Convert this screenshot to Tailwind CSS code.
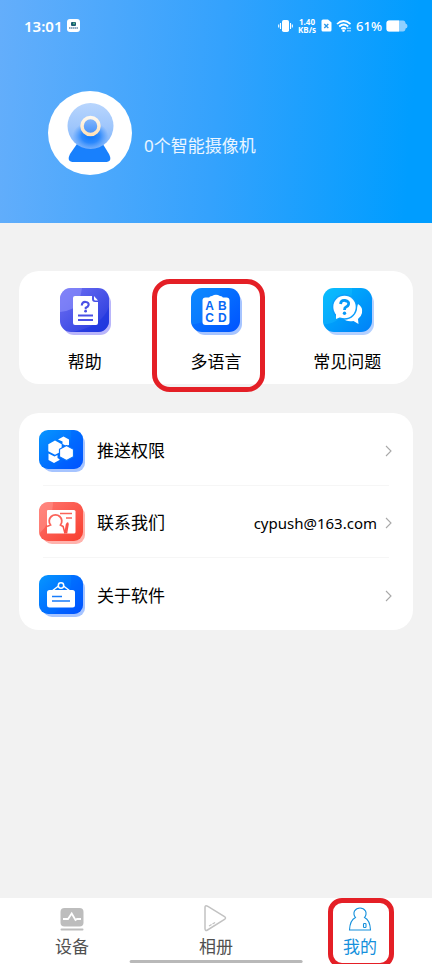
<!DOCTYPE html>
<html lang="zh-CN">
<head>
<meta charset="utf-8">
<meta name="viewport" content="width=device-width, initial-scale=1">
<title>我的</title>
<script src="https://cdn.jsdelivr.net/npm/@tailwindcss/browser@4"></script>
</head>
<body class="min-h-screen flex flex-col bg-[#f2f2f2] text-black text-[17px] leading-6 font-['Noto_Sans','Noto_Sans_CJK_SC',sans-serif]">

<header class="bg-[linear-gradient(94deg,#64aefb_0%,#34a2fd_50%,#009dff_94%)] text-white pb-12">
  <div class="flex items-center justify-between h-[51px] px-6">
    <div class="flex items-center gap-[5px]">
      <span class="text-[15px] font-semibold">13:01</span>
      <svg width="13" height="13" viewBox="0 0 13 13" aria-hidden="true"><rect width="13" height="13" rx="3" fill="#fff"/><rect x="4" y="3" width="5" height="4" rx="1" fill="#1d5c74"/><circle cx="7" cy="4.500" r="1" fill="#5fc08a"/><path d="M2 9h9" stroke="#6d8fae" stroke-width="1.500" stroke-dasharray="1.500 .4"/></svg>
    </div>
    <div class="flex items-center gap-1">
      <svg width="15" height="14" viewBox="0 0 15 14" aria-hidden="true" fill="none" stroke="#fff"><rect x="4" y="1" width="7" height="12" rx="1.800" fill="#fff" stroke="none"/><path d="M2.500 4v6M.7 5.500v3M12.500 4v6M14.300 5.500v3" stroke-width="1.100"/></svg>
      <span class="flex flex-col items-center w-5 text-[8px] leading-[8px] font-bold"><span>1.40</span><span>KB/s</span></span>
      <svg width="11" height="13" viewBox="0 0 11 13" aria-hidden="true"><path d="M2 .5h5l3.500 3V11q0 1.500-1.500 1.500H2Q.5 12.500.5 11V2Q.5.500 2 .5z" fill="#fff"/><path d="M3.300 5l4 4m0-4l-4 4" stroke="#2a96e8" stroke-width="1.400"/></svg>
      <svg width="16" height="14" viewBox="0 0 16 14" aria-hidden="true" fill="none" stroke="#fff" stroke-width="1.700"><path d="M1 5Q7.500-1 14.500 5M3.200 7.500q4.400-4 9 0M5.400 10q2.200-2 4.600 0"/><circle cx="7.600" cy="11.700" r="1.300" fill="#fff" stroke="none"/><path d="M12 8.500v4M14 8.500v4" stroke-width="1.100" stroke-dasharray="1.600 .8"/></svg>
      <span class="text-[13px] font-medium">61%</span>
      <svg width="22" height="12" viewBox="0 0 22 12" aria-hidden="true"><path d="M3 .5h14q2.300 0 2.600 3Q21.500 4 21.500 6t-1.900 2.500q-.3 3-2.600 3H3Q.5 11.500.5 9V3Q.5.500 3 .5z" fill="#8fd0ff"/><path d="M13 .5H3Q.5.500.5 3v6q0 2.500 2.500 2.500h10z" fill="#fff"/></svg>
    </div>
  </div>
  <div class="flex items-center gap-3 pl-12 pt-10">
    <svg width="84" height="84" viewBox="0 0 84 84" role="img" aria-label="头像">
      <defs>
        <linearGradient id="lens" x1="0" y1="0" x2="0" y2="1"><stop offset="0" stop-color="#b8d5fd"/><stop offset=".5" stop-color="#a0c7fc"/><stop offset="1" stop-color="#7ab2fc"/></linearGradient>
        <radialGradient id="glow" cx=".5" cy=".5" r=".5"><stop offset="0" stop-color="#0876fc"/><stop offset=".5" stop-color="#1c80fc" stop-opacity=".85"/><stop offset="1" stop-color="#388ffc" stop-opacity="0"/></radialGradient>
        <linearGradient id="ring" x1="0" y1="0" x2="0" y2="1"><stop offset="0" stop-color="#fff8ed"/><stop offset="1" stop-color="#ffe2b8"/></linearGradient>
        <linearGradient id="pupil" x1="0" y1="0" x2="0" y2="1"><stop offset="0" stop-color="#8abafb"/><stop offset="1" stop-color="#4390fa"/></linearGradient>
      </defs>
      <circle cx="42" cy="42" r="42" fill="#fff"/>
      <path d="M31 50h22l8 13q4 8-4 8H26q-8 0-4-8z" fill="#1880fd"/>
      <circle cx="42.500" cy="35" r="23" fill="url(#lens)"/>
      <ellipse cx="42.500" cy="45" rx="18" ry="14" fill="url(#glow)"/>
      <circle cx="42.500" cy="35" r="8.500" fill="url(#pupil)" stroke="url(#ring)" stroke-width="3.500"/>
    </svg>
    <p class="pt-[26px] text-white/90">0个智能摄像机</p>
  </div>
</header>

<main class="grow px-[19px] pt-12">
  <nav aria-label="快捷入口" class="grid grid-cols-3 rounded-[20px] bg-white">
    <a href="#help" class="flex flex-col items-center gap-[14px] pt-[17px] pb-[10px]">
      <svg class="overflow-visible" width="49" height="48" viewBox="0 0 49 48" aria-hidden="true">
        <defs><linearGradient id="a1" x1="0" y1="0" x2="1" y2="1"><stop offset="0" stop-color="#7272f4"/><stop offset="1" stop-color="#2237dc"/></linearGradient><clipPath id="tile"><rect width="49" height="44" rx="11"/></clipPath></defs>
        <rect x="3" y="4" width="48" height="43" rx="11" fill="#b9b5fa"/><g clip-path="url(#tile)"><rect width="49" height="44" fill="url(#a1)"/><path d="M0 0h22Q20 14 14 20 8 23 0 24z" fill="#8b8dfa" opacity=".65"/><path d="M49 19Q42 38 13 44h36z" fill="#1c36df" opacity=".6"/></g>
        <path d="M15 8h17v3q0 3 3 3h3v21q0 2-2 2H15q-2 0-2-2V10q0-2 2-2z" fill="#fff"/><path d="M34 8v3q0 1.500 1.500 1.500H38z" fill="#fff"/>
        <path d="M21.800 17.500q.3-4 4-3.500 3.500.5 2.700 3.300-.5 1.700-2.700 2.500v1.400" fill="none" stroke="#4a50e5" stroke-width="2.200"/><circle cx="25.600" cy="23.200" r="1.400" fill="#4a50e5"/><path d="M18 27.500h15M18 32h15" stroke="#4a50e5" stroke-width="2"/>
      </svg>
      <span>帮助</span>
    </a>
    <a href="#language" class="relative flex flex-col items-center gap-[14px] pt-[17px] pb-[10px]">
      <svg class="overflow-visible" width="49" height="48" viewBox="0 0 49 48" role="img" aria-label="ABCD">
        <defs><linearGradient id="a2" x1="0" y1="0" x2="1" y2="1"><stop offset="0" stop-color="#0a83ff"/><stop offset="1" stop-color="#0053ff"/></linearGradient></defs>
        <rect x="3" y="4" width="48" height="43" rx="11" fill="#a6c4ff"/><g clip-path="url(#tile)"><rect width="49" height="44" fill="url(#a2)"/><path d="M29 0q1 19-16 33Q7 37 0 36V0z" fill="#1595ff" opacity=".35"/></g>
        <rect x="11.500" y="9.500" width="27" height="27.500" rx="3" fill="#fff"/><path d="M18 11q0-3 3-3 4-2.500 8 0 3 0 3 3z" fill="#fff"/>
        <g fill="#0868f5" font-family="Liberation Sans, sans-serif" font-size="12" font-weight="bold" text-anchor="middle"><text x="18.700" y="22">A</text><text x="31.300" y="22">B</text><text x="18.700" y="34">C</text><text x="31.300" y="34">D</text></g>
      </svg>
      <span>多语言</span>
      <span class="absolute left-[2px] right-[17px] top-2 -bottom-2 rounded-[18px] border-5 border-[#e41f26]" aria-hidden="true"></span>
    </a>
    <a href="#faq" class="flex flex-col items-center gap-[14px] pt-[17px] pb-[10px]">
      <svg class="overflow-visible" width="49" height="48" viewBox="0 0 49 48" aria-hidden="true">
        <defs><linearGradient id="a3" x1="0" y1="0" x2="1" y2="1"><stop offset="0" stop-color="#00bafd"/><stop offset="1" stop-color="#0080f8"/></linearGradient></defs>
        <rect x="3" y="4" width="48" height="43" rx="11" fill="#b4d0ff"/><g clip-path="url(#tile)"><rect width="49" height="44" fill="url(#a3)"/><path d="M29 0q1 19-16 33Q7 37 0 36V0z" fill="#22cbff" opacity=".25"/></g>
        <path d="M35 16q5 3 4 9-.5 3-4 6l.5 5-5-3q-7 1.500-11-3.500 12 1 15.500-13.500z" fill="#fff"/>
        <circle cx="21.500" cy="19" r="12.700" fill="#0c9efb"/><circle cx="21.500" cy="19" r="11.200" fill="#fff"/><path d="M13 24v7l7-3z" fill="#fff"/>
        <path d="M17.500 16q.5-4 4.500-3.500 4.500.8 3.500 4-.5 1.700-2.500 2.500-1.500.7-1.500 3" fill="none" stroke="#0799f8" stroke-width="2.800"/><circle cx="21.500" cy="25.300" r="1.700" fill="#0799f8"/>
      </svg>
      <span>常见问题</span>
    </a>
  </nav>

  <ul class="mt-[29px] rounded-[20px] bg-white px-5">
    <li>
      <a href="#push" class="flex items-center h-[72px] pt-[3px]">
        <svg width="46" height="42" viewBox="0 0 46 42" aria-hidden="true">
          <defs><linearGradient id="b1" x1="0" y1="0" x2="1" y2="1"><stop offset="0" stop-color="#0696ff"/><stop offset=".6" stop-color="#006cff"/><stop offset="1" stop-color="#004fff"/></linearGradient><clipPath id="small"><rect width="44" height="39" rx="9"/></clipPath></defs>
          <rect x="4" y="4" width="42" height="38" rx="9" fill="#a6c4ff"/><g clip-path="url(#small)"><rect width="44" height="39" fill="url(#b1)"/><path d="M32 0h12v39H14Q34 26 32 0z" fill="#0058ff" opacity=".3"/></g>
          <g fill="#fff" stroke-linejoin="round"><path d="M19 9.500L24.500 6.500l5.500 3v5.500l-2.500 1-4-2V11.500z"/><path d="M9.500 23.500l6 3 3-1.500v3l2 1.200v.8l-5.500 3-5.500-3z"/><path d="M16 10.500l6.700 3.700v7L16 24.800l-6.700-3.600v-7z"/><path d="M27.500 15.500l7 3.800v7.400l-7 3.800-7-3.800v-7.400z" stroke="#0873fc" stroke-width="1.200"/></g>
        </svg>
        <span class="ml-3 grow">推送权限</span>
        <svg class="mr-px" width="7" height="12" viewBox="0 0 7 12" fill="none" stroke="#a8a8a8" stroke-width="1.100" aria-hidden="true"><path d="M1 1l5 5-5 5"/></svg>
      </a>
    </li>
    <li class="relative before:absolute before:top-0 before:left-1 before:right-1 before:h-px before:bg-[#f6f6f6]">
      <a href="mailto:cypush@163.com" class="flex items-center h-[72px] pt-[3px]">
        <svg width="46" height="42" viewBox="0 0 46 42" aria-hidden="true">
          <defs><linearGradient id="b2" x1="0" y1="0" x2="1" y2="1"><stop offset="0" stop-color="#ff7770"/><stop offset="1" stop-color="#f83d2d"/></linearGradient></defs>
          <rect x="4" y="4" width="42" height="38" rx="9" fill="#ffb3ad"/><g clip-path="url(#small)"><rect width="44" height="39" fill="url(#b2)"/><path d="M14 0q0 19-14 32V0z" fill="#ff9790" opacity=".5"/></g>
          <path d="M9 8h26q1.500 0 1.500 1.500V30q0 1.500-1.500 1.500H8V9q0-1 1-1z" fill="#fff"/>
          <path d="M21 11.500h12M27 16h6" stroke="#fb6359" stroke-width="1.500"/>
          <path d="M8 24.500l3.500-1.500a6.300 6.300 0 1 1 10 0L24 24.500" fill="none" stroke="#fb6359" stroke-width="1.800"/>
          <path d="M24 24l2 7.500 1.500-9q1.500-3 1.500 0l-1.500 9" fill="none" stroke="#fb5148" stroke-width="1.500"/>
        </svg>
        <span class="ml-3 grow">联系我们</span>
        <span class="mr-2 text-[15px]">cypush@163.com</span>
        <svg class="mr-px" width="7" height="12" viewBox="0 0 7 12" fill="none" stroke="#a8a8a8" stroke-width="1.100" aria-hidden="true"><path d="M1 1l5 5-5 5"/></svg>
      </a>
    </li>
    <li class="relative before:absolute before:top-0 before:left-1 before:right-1 before:h-px before:bg-[#f6f6f6]">
      <a href="#about" class="flex items-center h-[73px] pt-1">
        <svg width="46" height="42" viewBox="0 0 46 42" aria-hidden="true">
          <rect x="4" y="4" width="42" height="38" rx="9" fill="#a6c4ff"/><g clip-path="url(#small)"><rect width="44" height="39" fill="url(#b1)"/><path d="M32 0h12v39H14Q34 26 32 0z" fill="#0058ff" opacity=".3"/></g>
          <rect x="8" y="15" width="28" height="17.500" rx="2.500" fill="#fff"/><path d="M13 16l6.500-5M31 16l-6.500-5" stroke="#fff" stroke-width="1.500"/><circle cx="22" cy="10.500" r="2.700" fill="none" stroke="#fff" stroke-width="1.500"/>
          <path d="M13 21.500h10M13 26h18" stroke="#187cfa" stroke-width="1.600"/>
        </svg>
        <span class="ml-3 grow">关于软件</span>
        <svg class="mr-px" width="7" height="12" viewBox="0 0 7 12" fill="none" stroke="#a8a8a8" stroke-width="1.100" aria-hidden="true"><path d="M1 1l5 5-5 5"/></svg>
      </a>
    </li>
  </ul>
</main>

<nav aria-label="主导航" class="relative grid grid-cols-3 bg-white text-[#505050] overflow-hidden">
  <a href="#devices" class="flex flex-col items-center pt-[7px] pb-[5px]">
    <svg width="28" height="30" viewBox="0 0 28 30" aria-hidden="true"><rect x="2.500" y="3" width="23" height="18.500" rx="4" fill="#bdbdbd"/><path d="M5 14h5l3.700-5.500L17.500 15l1.500-1h4" fill="none" stroke="#fff" stroke-width="1.800"/><path d="M3.500 24.500h21" stroke="#bdbdbd" stroke-width="2" stroke-linecap="round"/></svg>
    <span>设备</span>
  </a>
  <a href="#album" class="flex flex-col items-center pt-[7px] pb-[5px]">
    <svg width="28" height="30" viewBox="0 0 28 30" fill="none" stroke="#c2c2c2" aria-hidden="true"><path d="M3 2.500Q3 0 5.500 1.200L22.500 11.500q2 1.500 0 3L5.500 25Q3 26.500 3 23.500z" stroke-width="1.500"/><path d="M7 21l7-4" stroke-width="1.200" stroke-dasharray="3 1"/></svg>
    <span>相册</span>
  </a>
  <a href="#mine" aria-current="page" class="relative flex flex-col items-center pt-[7px] pb-[5px] text-[#1590dc]">
    <svg width="28" height="30" viewBox="0 0 28 30" fill="none" stroke="#1590dc" stroke-width="1.100" aria-hidden="true"><path d="M9.500 12.500Q7 9.500 8.500 6 10.500 3 14 3t5.500 3q1.500 3.500-1 6.500 5.500 2.500 6 12.500h-21Q4 15 9.500 12.500z"/><rect x="17.500" y="18.500" width="2.500" height="4" rx=".8"/></svg>
    <span>我的</span>
    <span class="absolute left-10 right-[38px] top-0 -bottom-1 rounded-[14px] border-5 border-[#e41f26]" aria-hidden="true"></span>
  </a>
  <span class="absolute bottom-px left-1/2 h-[3px] w-2/5 -translate-x-1/2 rounded-full bg-[#b9b9b9]" aria-hidden="true"></span>
</nav>
</body>
</html>
